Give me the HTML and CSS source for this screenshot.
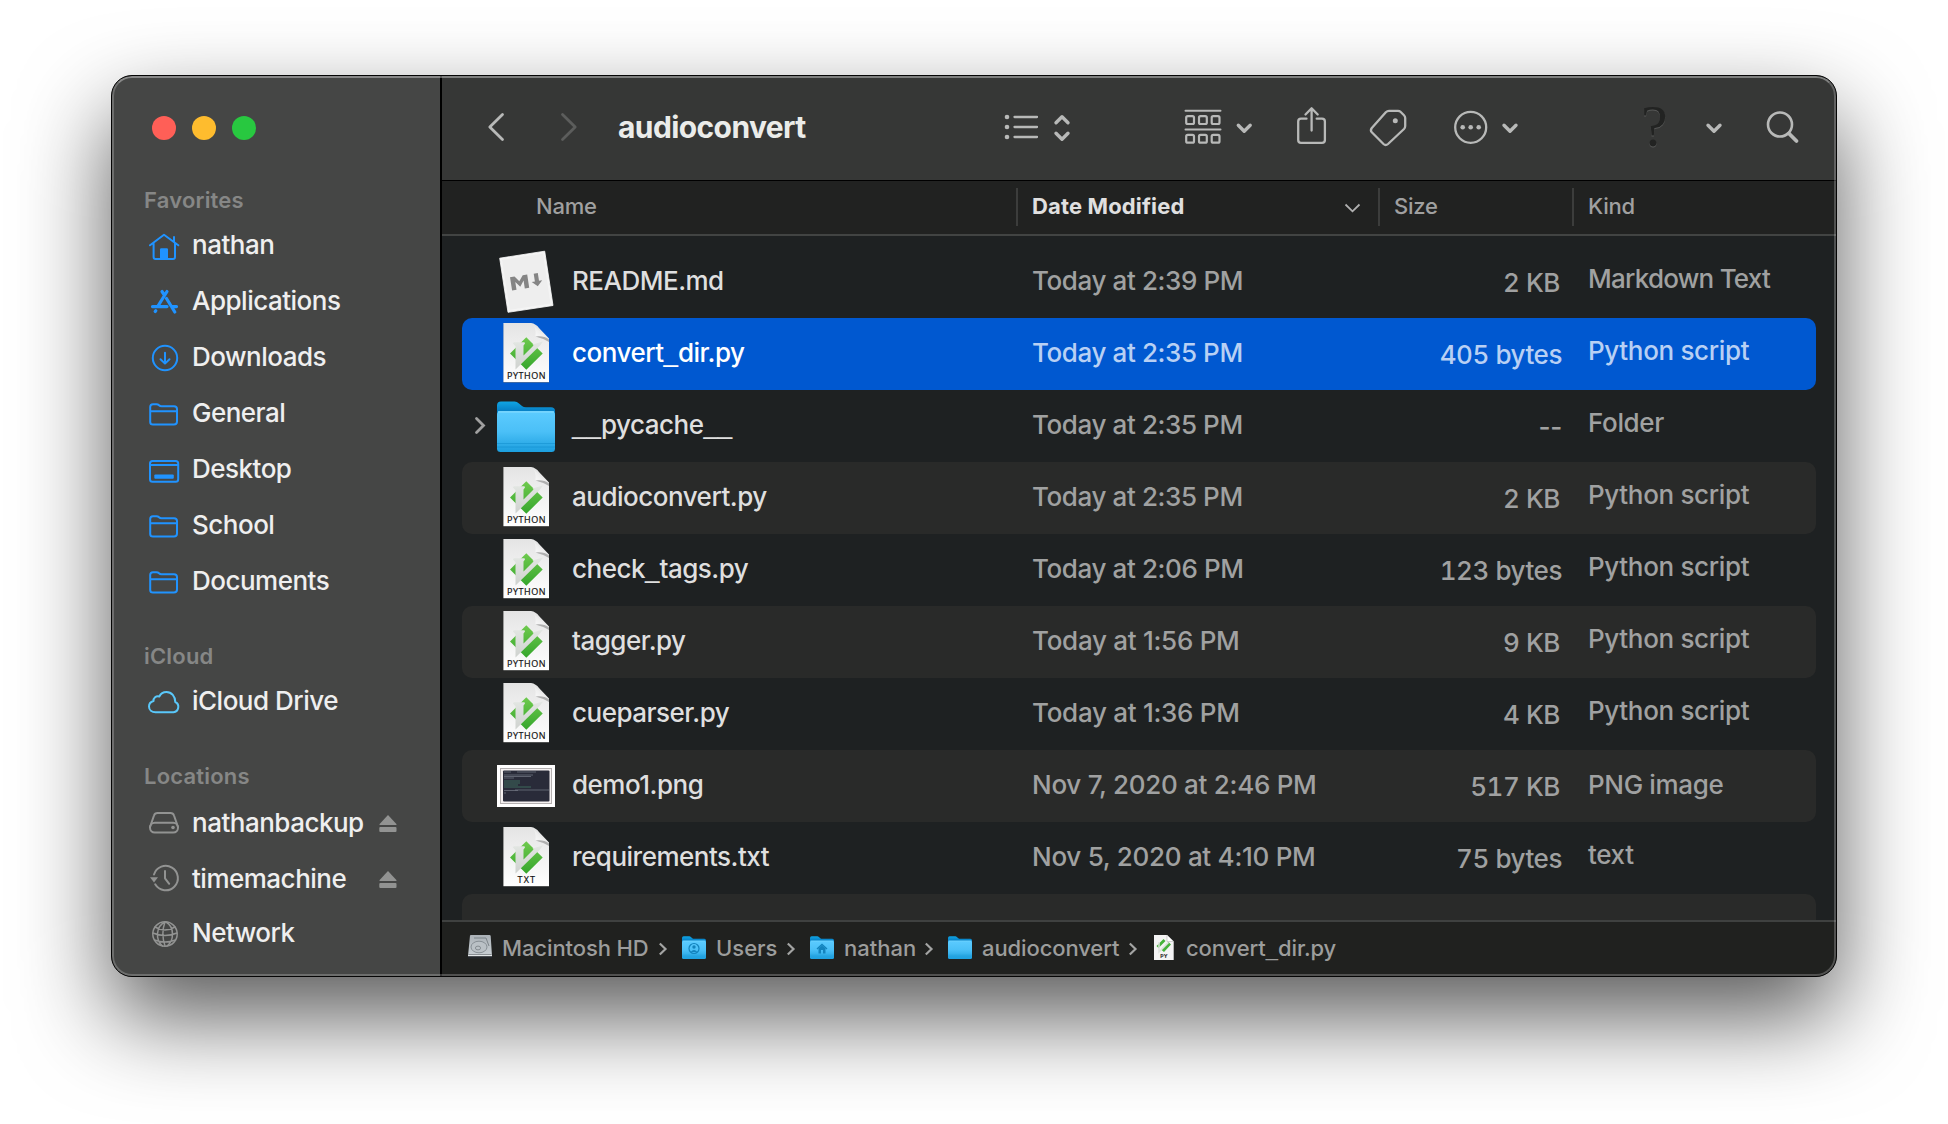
FILE: index.html
```html
<!DOCTYPE html>
<html lang="en">
<head>
<meta charset="utf-8">
<title>audioconvert</title>
<link rel="stylesheet" href="styles.css">
</head>
<body>
<svg class="defs" width="0" height="0" aria-hidden="true">
  <defs>
    <linearGradient id="paper" x1="0" y1="0" x2="0" y2="1"><stop offset="0" stop-color="#e4e4e4"/><stop offset="1" stop-color="#fff"/></linearGradient>
    <linearGradient id="curl" x1="0" y1="1" x2="1" y2="0"><stop offset="0" stop-color="#fff"/><stop offset=".5" stop-color="#ededed"/><stop offset="1" stop-color="#aaa"/></linearGradient>
    <linearGradient id="green" x1="0" y1="0" x2="0" y2="1"><stop offset="0" stop-color="#6fca4e"/><stop offset="1" stop-color="#35a62c"/></linearGradient>
    <linearGradient id="vee" x1="0" y1="0" x2="0" y2="1"><stop offset="0" stop-color="#e2e6e2"/><stop offset="1" stop-color="#cfd2cf"/></linearGradient>
    <linearGradient id="back" x1="0" y1="0" x2="0" y2="1"><stop offset="0" stop-color="#10a5e4"/><stop offset=".3" stop-color="#0782c8"/></linearGradient>
    <linearGradient id="front" x1="0" y1="0" x2="0" y2="1"><stop offset="0" stop-color="#5ccbff"/><stop offset=".5" stop-color="#4bc0f7"/><stop offset="1" stop-color="#1c9fdf"/></linearGradient>
    <linearGradient id="metal" x1="0" y1="0" x2="0" y2="1"><stop offset="0" stop-color="#aab1b7"/><stop offset="1" stop-color="#c9d0d4"/></linearGradient>
    <symbol id="page" viewBox="0 0 72 72">
      <path d="M13.4 6H41.5L59 22V65H13.4Z" fill="#000" opacity=".35"/>
      <path d="M13.4 5H41Q46 5.800 49 10L59 20.500V64.300H13.4Z" fill="url(#paper)"/>
      <path d="M41 5Q46.500 8 45.500 18.500Q54 17.500 59 21.500Z" fill="url(#curl)"/>
      <path d="M45.500 18.500Q54 17.500 59 21.500V24Q52 20 45.500 18.500Z" fill="#555" opacity=".4"/>
      <path d="M36.300 19.300L41 24L52.700 35.500L36.300 51.800L20 35.500L31 24.500Z" fill="url(#green)"/>
      <path d="M22.800 25.200L24 24.200H34.500L35 25.500L33.500 27.500V37.500L43.500 27.500L42.500 26.500L53 23.500L50 27.500L25.500 51.500V28.300Z" fill="url(#vee)"/>
    </symbol>
    <symbol id="folder" viewBox="0 0 58 51">
      <path d="M0 4.500Q0 .5 4 .5H17.500Q20 .5 22 2.500L25 5Q26.500 6.300 29 6.300H54Q58 6.300 58 10V30H0Z" fill="url(#back)"/>
      <path d="M0 14Q0 10.300 3.500 10.300H54.500Q58 10.300 58 14V47.500Q58 51 54.500 51H3.500Q0 51 0 47.500Z" fill="url(#front)"/>
      <path d="M1 10.900H57" stroke="#86dcff" stroke-width="1.200"/>
      <path d="M0 42.500H58M0 46H58" stroke="#138fce" stroke-width=".8" opacity=".7"/>
    </symbol>
    <symbol id="side-folder" viewBox="0 0 48 56">
      <path d="M10.200 38V23Q10.200 20.200 13 20.200H16.500Q18 20.200 19 21.200Q20 22.200 21.500 22.200H34Q37 22.200 37 25V37.500Q37 40.500 34 40.500H13Q10.200 40.500 10.200 38ZM10.200 27.200H37"/>
    </symbol>
    <symbol id="eject" viewBox="0 0 20 56"><path d="M10 21L18.600 30.200Q18.600 31 18 31H2Q1.400 31 1.400 30.200Z"/><rect x="1.300" y="33" width="17.200" height="5" rx="1"/></symbol>
    <symbol id="sep" viewBox="0 0 10 54"><path d="M1.800 21.500L7.500 27L1.800 32.500" fill="none" stroke="#a3a4a3" stroke-width="2.200"/></symbol>
  </defs>
</svg>

<div class="window">
  <aside class="sidebar">
    <div class="lights"><i class="close"></i><i class="minimize"></i><i class="zoom"></i></div>
    <h2>Favorites</h2>
    <a class="item"><svg class="side"><path d="M10 29.300L24 18.700L38.300 29.300M13.600 27V41Q13.600 42.900 15.500 42.900H33Q35 42.900 35 41V27M34 25.500V21"/><path class="solid" d="M20 43V33.500Q20 32.300 21.200 32.300H26.800Q28 32.300 28 33.500V43Z"/></svg><span>nathan</span></a>
    <a class="item"><svg class="side thick"><path d="M12.500 34.600H27M31.500 34.600H36.500M27 19.500L18 34M22 19.500L24 22.500M26.500 26.500L34.800 40M15.800 38.700L15.200 39.500"/></svg><span>Applications</span></a>
    <a class="item"><svg class="side"><circle cx="25" cy="30" r="12.200"/><path d="M25 24.700V35.500M20.500 31.300L25 35.600L29.500 31.300"/></svg><span>Downloads</span></a>
    <a class="item"><svg class="side"><use href="#side-folder"/></svg><span>General</span></a>
    <a class="item"><svg class="side"><rect x="10" y="21" width="28.200" height="20.800" rx="2.500"/><path d="M10 25H38"/><rect class="solid" x="14.300" y="34.500" width="19.500" height="4.200" rx="1"/></svg><span>Desktop</span></a>
    <a class="item"><svg class="side"><use href="#side-folder"/></svg><span>School</span></a>
    <a class="item"><svg class="side"><use href="#side-folder"/></svg><span>Documents</span></a>
    <h2 class="next">iCloud</h2>
    <a class="item"><svg class="side cloud"><path d="M15.500 40.200H33.500A5.400 5.400 0 0 0 35.300 30C35.300 24.500 31.500 20 26.500 20C23 20 20.500 22 19.300 24.500C16 23.500 13.300 26 13.500 29C10.500 29.800 9 32 9 34.500C9 38 12 40.200 15.500 40.200Z"/></svg><span>iCloud Drive</span></a>
    <h2 class="next tall">Locations</h2>
    <a class="item"><svg class="side gray"><path d="M10 33L14 21.500Q14.800 19 17.500 19H30.500Q33.200 19 34 21.500L38 33"/><rect x="10" y="28.800" width="28" height="9.800" rx="4.800"/><circle class="solid" cx="33" cy="33.500" r="1.800"/></svg><span class="wide">nathanbackup</span><svg class="ejector"><use href="#eject"/></svg></a>
    <a class="item short"><svg class="side gray"><path d="M14 24.500A12.200 12.200 0 1 1 15.200 34.300M25 21V28.300L29.200 33.800"/><path class="solid" d="M10 27.300H18L14 32.500Z"/></svg><span class="wide">timemachine</span><svg class="ejector"><use href="#eject"/></svg></a>
    <a class="item"><svg class="side gray globe"><circle cx="25" cy="30" r="12.200"/><path d="M25 18C16 22 15 36 22.500 42M25 18C22 26 23 36 25 42M26 18C35 23 34 37 27 42M15 23Q25 29 35 23M12.800 29Q25 34 37 29M14.500 36Q25 40 35.500 36"/></svg><span>Network</span></a>
  </aside>

  <main>
    <header class="toolbar">
      <svg class="t-nav" viewBox="482 76 102 104"><path d="M502.500 114.400L489.800 127L502.500 139.600" stroke-width="2.800"/><path class="dim" d="M562.500 114.400L575.200 127L562.500 139.600" stroke-width="2.800"/></svg>
      <h1>audioconvert</h1>
      <svg class="t-view" viewBox="1000 76 76 104"><g class="fill"><circle cx="1007" cy="117" r="2.300"/><circle cx="1007" cy="127" r="2.300"/><circle cx="1007" cy="137" r="2.300"/></g><path d="M1014.500 117H1037M1014.500 127H1037M1014.500 137H1037"/><path class="bold" d="M1056 122.700L1062 116.700L1068 122.700M1056 133.300L1062 139.300L1068 133.300"/></svg>
      <svg class="t-group" viewBox="1180 76 80 104"><path d="M1185.500 110.700H1220.500M1185.500 129.400H1220.500" stroke-width="2"/><g stroke-width="2.200"><rect x="1186.200" y="116.200" width="7.800" height="7.800" rx="1.500"/><rect x="1199" y="116.200" width="7.800" height="7.800" rx="1.500"/><rect x="1211.700" y="116.200" width="7.800" height="7.800" rx="1.500"/><rect x="1186.200" y="134.900" width="7.800" height="7.800" rx="1.500"/><rect x="1199" y="134.900" width="7.800" height="7.800" rx="1.500"/><rect x="1211.700" y="134.900" width="7.800" height="7.800" rx="1.500"/></g><path class="bold" d="M1238.300 125.300L1244.200 131.200L1250.200 125.300"/></svg>
      <svg class="t-share" viewBox="1290 76 44 104"><path d="M1306.500 118.700H1301Q1298.200 118.700 1298.200 121.500V140Q1298.200 142.900 1301 142.900H1322Q1324.900 142.900 1324.900 140V121.500Q1324.900 118.700 1322 118.700H1316.700M1311.600 130.500V108.500M1305.500 114.500L1311.600 108.300L1317.700 114.500"/></svg>
      <svg class="t-tag" viewBox="1364 76 48 104"><path d="M1385.800 112.200Q1387.200 110.800 1389 110.800H1398Q1399.500 110.800 1400.500 111.800L1404 115.300Q1405.200 116.500 1405.200 118V126Q1405.200 127.800 1404 129L1388 144Q1385.700 146 1383.500 144L1371.800 132.300Q1370 130.300 1371.800 128Z"/><circle class="fill" cx="1395.300" cy="120.700" r="2.500"/></svg>
      <svg class="t-more" viewBox="1450 76 72 104"><circle cx="1470.700" cy="127.300" r="15.500"/><g class="fill"><circle cx="1462.700" cy="127.300" r="2.300"/><circle cx="1470.700" cy="127.300" r="2.300"/><circle cx="1478.700" cy="127.300" r="2.300"/></g><path class="bold" d="M1504 125.300L1510 131.200L1516 125.300"/></svg>
      <span class="help">?</span>
      <svg class="t-end" viewBox="1700 76 104 104"><path class="bold" d="M1708 125.300L1714 131.200L1720 125.300"/><circle cx="1780" cy="124.500" r="12" stroke-width="2.600"/><path d="M1789 133.500L1796.500 141" stroke-width="3.800"/></svg>
    </header>

    <div class="columns">
      <span class="c-name">Name</span>
      <span class="c-date">Date Modified<svg viewBox="1342 188 20 38"><path d="M1345.500 204.500L1352.500 211.300L1359.500 204.500" fill="none" stroke="#b0b0b0" stroke-width="1.800"/></svg></span>
      <span class="c-size">Size</span>
      <span class="c-kind">Kind</span>
    </div>

    <section class="list">
      <div class="row">
        <svg class="icon" viewBox="0 0 72 72"><path d="M9.700 12.200L54.700 5.200L63 59.500L18 66.300Z" fill="#f4f4f4" stroke="#fff" stroke-width=".8"/><path d="M12 14L53 7.600L60.500 57.500L20 63.700Z" fill="#eeeeee"/><g fill="#858585"><path d="M20 31.200L24.500 30.500L29.300 35.300L32.700 29.200L37.200 28.500L39.200 41.700L34.800 42.400L33.600 34.600L30.300 40.700L25.300 35.900L26.500 43.700L22.100 44.400Z"/><path d="M43.700 27.700L47.800 27L49 34.800L52.200 34.200L47.800 40.200L41.700 35.900L44.900 35.400Z"/></g></svg>
        <span class="name">README.md</span><span class="date">Today at 2:39 PM</span><span class="size kb">2 KB</span><span class="kind tight">Markdown Text</span>
      </div>
      <div class="row selected">
        <svg class="icon"><use href="#page"/><text x="17" y="60.800" textLength="38.500">PYTHON</text></svg>
        <span class="name">convert<i>_</i>dir.py</span><span class="date">Today at 2:35 PM</span><span class="size">405 bytes</span><span class="kind">Python script</span>
      </div>
      <div class="row">
        <svg class="twist" viewBox="0 0 28 72"><path d="M14.500 28.500L21.500 35.500L14.500 42.500" fill="none" stroke="#a0a0a0" stroke-width="2.800" stroke-linecap="round"/></svg>
        <svg class="icon"><use href="#folder" x="7" y="11" width="58" height="51"/></svg>
        <span class="name"><i>__</i>pycache<i>__</i></span><span class="date">Today at 2:35 PM</span><span class="size none">--</span><span class="kind">Folder</span>
      </div>
      <div class="row alt">
        <svg class="icon"><use href="#page"/><text x="17" y="60.800" textLength="38.500">PYTHON</text></svg>
        <span class="name">audioconvert.py</span><span class="date">Today at 2:35 PM</span><span class="size kb">2 KB</span><span class="kind">Python script</span>
      </div>
      <div class="row">
        <svg class="icon"><use href="#page"/><text x="17" y="60.800" textLength="38.500">PYTHON</text></svg>
        <span class="name">check<i>_</i>tags.py</span><span class="date">Today at 2:06 PM</span><span class="size">123 bytes</span><span class="kind">Python script</span>
      </div>
      <div class="row alt">
        <svg class="icon"><use href="#page"/><text x="17" y="60.800" textLength="38.500">PYTHON</text></svg>
        <span class="name">tagger.py</span><span class="date loose">Today at 1:56 PM</span><span class="size kb">9 KB</span><span class="kind">Python script</span>
      </div>
      <div class="row">
        <svg class="icon"><use href="#page"/><text x="17" y="60.800" textLength="38.500">PYTHON</text></svg>
        <span class="name">cueparser.py</span><span class="date loose">Today at 1:36 PM</span><span class="size kb">4 KB</span><span class="kind">Python script</span>
      </div>
      <div class="row alt">
        <svg class="icon" viewBox="0 0 72 72"><rect x="7" y="15" width="58" height="42" fill="#fff"/><rect x="10.500" y="18.500" width="51" height="35" fill="#f5f1f1" stroke="#b5b1b1"/><rect x="13" y="20.500" width="46.500" height="31" rx="1" fill="#292b39"/><path d="M14 22H21M27 22H46M14 25H43M14 26.500H41M14 28H24M25 40H59M14 40.500H28M14 43H16" stroke="#777b88" stroke-width=".7"/><path d="M14 31H30M14 33H30M14 35H28M14 37H41" stroke="#3f6a5c" stroke-width="1"/></svg>
        <span class="name">demo1.png</span><span class="date loose">Nov 7, 2020 at 2:46 PM</span><span class="size kb">517 KB</span><span class="kind low">PNG image</span>
      </div>
      <div class="row">
        <svg class="icon"><use href="#page"/><text x="27.500" y="60.800" textLength="17.500">TXT</text></svg>
        <span class="name">requirements.txt</span><span class="date loose">Nov 5, 2020 at 4:10 PM</span><span class="size">75 bytes</span><span class="kind">text</span>
      </div>
      <div class="row alt"></div>
    </section>

    <footer class="path">
      <svg class="p-disk" viewBox="466 922 28 54"><path d="M470 935.500Q470 935 471 935H489.500Q490.500 935 490.700 936L492 956H468Z" fill="url(#metal)"/><rect x="468" y="954.500" width="24" height="4.300" rx="1" fill="#22262a"/><path d="M468 955.500H492" stroke="#e1e6e8" stroke-width="1.400"/><ellipse cx="479" cy="947" rx="8" ry="5.800" fill="#bac1c6" stroke="#878f95"/><ellipse cx="478" cy="948" rx="2.600" ry="1.900" fill="none" stroke="#858c91"/><path d="M474 938H486L489 946" fill="none" stroke="#7b8388"/></svg>
      <span class="p1">Macintosh HD</span><svg class="sep"><use href="#sep"/></svg>
      <svg class="mini" viewBox="0 0 24 54"><svg x="0" y="14" width="24" height="23" viewBox="0 0 58 51" preserveAspectRatio="none"><use href="#folder" width="58" height="51"/></svg><circle cx="12" cy="26.500" r="5" fill="none" stroke="#1383bd" stroke-width="1.200"/><circle cx="12" cy="25" r="1.700" fill="#1383bd"/><path d="M8.700 30Q12 25.800 15.300 30Z" fill="#1383bd"/></svg>
      <span class="p2">Users</span><svg class="sep"><use href="#sep"/></svg>
      <svg class="mini" viewBox="0 0 24 54"><svg x="0" y="14" width="24" height="23" viewBox="0 0 58 51" preserveAspectRatio="none"><use href="#folder" width="58" height="51"/></svg><path d="M7 27L12 22.500L17 27" fill="none" stroke="#1383bd" stroke-width="1.400"/><path d="M8.500 26.500L12 23.500L15.500 26.500V31.500H13V28H11V31.500H8.500Z" fill="#1383bd"/></svg>
      <span class="p3">nathan</span><svg class="sep"><use href="#sep"/></svg>
      <svg class="mini" viewBox="0 0 24 54"><svg x="0" y="14" width="24" height="23" viewBox="0 0 58 51" preserveAspectRatio="none"><use href="#folder" width="58" height="51"/></svg></svg>
      <span class="p4">audioconvert</span><svg class="sep"><use href="#sep"/></svg>
      <svg class="mini doc" viewBox="0 0 20 54"><path d="M0 13H13L19.700 19.500V38H0Z" fill="#f4f4f4"/><path d="M13 13V19.500H19.700Z" fill="#fff" stroke="#aaa" stroke-width=".5"/><path d="M9.500 17L11.500 19L7 23.500L4.500 26L2.500 24ZM14.500 20L17 22.500L10 30L7 27.500Z" fill="#46b23b"/><path d="M5 20V30L14.500 20.500" fill="none" stroke="#dde1dd" stroke-width="1.500"/><text x="6" y="36.300">PY</text></svg>
      <span class="p5">convert<i>_</i>dir.py</span>
    </footer>
  </main>
</div>
</body>
</html>
```

FILE: styles.css
```css
* { box-sizing: border-box; }
body {
  margin: 0;
  width: 1948px;
  height: 1124px;
  overflow: hidden;
  background: #fff;
  font-family: Inter, "Liberation Sans", sans-serif;
  font-size: 26px;
  letter-spacing: -0.5px;
  white-space: nowrap;
}
.defs { display: block; }
svg { display: block; flex: none; }
h1, h2 { margin: 0; }

.window {
  position: relative;
  display: flex;
  width: 1726px;
  height: 902px;
  margin: 75px 0 0 111px;
  border: 1px solid #050505;
  border-radius: 21px;
  overflow: hidden;
  background: #000;
  box-shadow: 0 40px 90px rgba(0, 0, 0, .65);
}
.window::after {
  content: "";
  position: absolute;
  inset: 0;
  border: 2px solid rgba(255, 255, 255, .22);
  border-top-color: rgba(255, 255, 255, .36);
  border-radius: 20px;
}

/* Sidebar */
.sidebar {
  width: 328px;
  padding: 40px 0 0 28px;
  background: #454645;
}
.lights { display: flex; gap: 16px; height: 56px; padding-left: 12px; }
.lights i { width: 24px; height: 24px; border-radius: 50%; }
.close { background: #ff5f57; }
.minimize { background: #febc2e; }
.zoom { background: #28c840; }
h2 {
  height: 44px;
  padding-left: 4px;
  font-size: 22px;
  font-weight: 600;
  line-height: 56px;
  letter-spacing: .2px;
  color: #868786;
}
h2.next { margin-top: 20px; }
h2.tall { height: 46px; }
.item {
  display: flex;
  height: 56px;
  line-height: 57px;
  font-weight: 450;
  color: #efefef;
}
.item.short { height: 54px; }
.item span { padding-left: 4px; }
.item .wide { width: 190px; }
.side {
  width: 48px;
  height: 56px;
  fill: none;
  stroke: #2093ff;
  stroke-width: 2;
  stroke-linejoin: round;
  stroke-linecap: round;
}
.side .solid { fill: #2093ff; stroke: none; }
.side.thick { stroke-width: 3.200; }
.side.cloud { stroke: #5ac8fa; }
.side.gray { stroke: #929392; }
.side.gray .solid { fill: #929392; }
.side.globe { stroke-width: 1.500; }
.ejector { width: 20px; height: 56px; fill: #929392; }

/* Main column */
main { flex: none; width: 1394px; margin-left: 2px; background: #1e2122; }
.toolbar {
  display: flex;
  height: 105px;
  padding-left: 40px;
  border-bottom: 1px solid #000;
  background: #363736;
}
.toolbar svg {
  height: 104px;
  fill: none;
  stroke: #b8b9b8;
  stroke-width: 2.300;
  stroke-linecap: round;
  stroke-linejoin: round;
}
.toolbar .fill { fill: #b8b9b8; stroke: none; }
.toolbar .bold { stroke-width: 3.400; }
.toolbar .dim { stroke: #5c5d5c; }
h1 {
  width: 382px;
  margin-left: 34px;
  font-size: 30px;
  font-weight: 700;
  line-height: 102px;
  letter-spacing: -0.6px;
  color: #ebecea;
}
.t-nav { width: 102px; }
.t-view { width: 76px; }
.t-group { width: 80px; margin-left: 104px; }
.t-share { width: 44px; margin-left: 30px; }
.t-tag { width: 48px; margin-left: 30px; }
.t-more { width: 72px; margin-left: 38px; }
.help {
  width: 40px;
  margin-left: 112px;
  font: 60px/101px "Liberation Serif", serif;
  text-align: center;
  color: #222322;
  text-shadow: 0 1px 0 #585958;
}
.t-end { width: 104px; margin-left: 26px; }

.columns {
  display: flex;
  height: 55px;
  padding-top: 7px;
  border-bottom: 2px solid #424443;
  background: #212221;
  font-size: 22px;
  font-weight: 450;
  line-height: 36px;
  letter-spacing: -.2px;
  color: #a0a0a0;
}
.columns span { height: 38px; }
.c-name { width: 574px; padding-left: 94px; }
.columns .c-date { display: flex; justify-content: space-between; width: 362px; padding: 0 16px 0 14px; border-left: 2px solid #3c3d3c; font-weight: 700; letter-spacing: .15px; color: #e0e0e0; }
.c-date svg { width: 20px; height: 38px; }
.c-size { width: 194px; padding-left: 14px; border-left: 2px solid #3c3d3c; }
.c-kind { padding-left: 14px; border-left: 2px solid #3c3d3c; }

.list { height: 684px; padding: 10px 20px 0 20px; overflow: hidden; }
.row {
  display: grid;
  grid-template-columns: 28px 72px 469px 347px 184px 1fr;
  height: 72px;
  border-radius: 10px;
  font-weight: 450;
  color: #a0a1a1;
}
.row.alt { background: #292a29; }
.row.selected { background: #0058d0; color: #b8d0f4; }
.row > * { grid-row: 1; }
.twist { grid-column: 1; width: 28px; height: 72px; }
.icon { grid-column: 2; width: 72px; height: 72px; }
.icon text { font: 9px "Open Sans", sans-serif; fill: #111; stroke: #111; stroke-width: .2; letter-spacing: 0; }
.name { grid-column: 3; padding-left: 10px; line-height: 69px; color: #dfdfdf; }
/* Underscores that join into one line */
.name i, .p5 i { font-family: "Liberation Sans", sans-serif; font-style: normal; letter-spacing: 0; line-height: 1; }
.selected .name { color: #fff; }
.date { grid-column: 4; padding-left: 1px; line-height: 69px; letter-spacing: -.4px; }
.date.loose { letter-spacing: -.28px; }
.size { grid-column: 5; text-align: right; line-height: 73px; letter-spacing: -.45px; font-variant-numeric: tabular-nums; }
.size.kb { padding-right: 2px; }
.size.none { font-variant-numeric: normal; letter-spacing: -.3px; }
.kind { grid-column: 6; padding-left: 26px; line-height: 65px; letter-spacing: -.35px; }
.kind.tight { letter-spacing: -.75px; }
.kind.low { line-height: 69px; }

/* Path bar */
.path {
  display: flex;
  height: 56px;
  padding-left: 24px;
  border-top: 2px solid #3f4140;
  background: #20211f;
  font-size: 22px;
  font-weight: 450;
  line-height: 52px;
  letter-spacing: 0;
  color: #9c9d9c;
}
.p-disk { width: 28px; height: 54px; margin-right: 8px; }
.sep { width: 10px; height: 54px; margin-right: 14px; }
.mini { width: 24px; height: 54px; margin-right: 10px; }
.mini.doc { width: 20px; margin-left: 2px; margin-right: 12px; }
.mini text { font: 700 6px "Open Sans", sans-serif; fill: #333; letter-spacing: 0; }
.p1 { width: 156px; letter-spacing: -.1px; }
.p2 { width: 70px; }
.p3 { width: 80px; }
.p4 { width: 146px; letter-spacing: -.1px; }
.p5 { letter-spacing: -.1px; }
```
